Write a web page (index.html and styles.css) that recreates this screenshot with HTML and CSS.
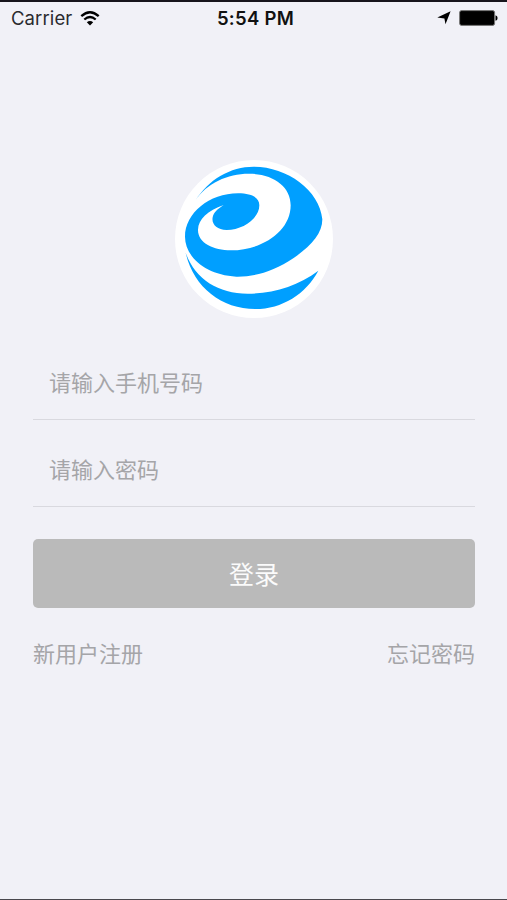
FILE: index.html
```html
<!DOCTYPE html>
<html lang="zh-CN">
<head>
<meta charset="utf-8">
<title>登录</title>
<link rel="stylesheet" href="styles.css">
</head>
<body>
<div class="screen">
  <header class="status">
    <div class="carrier">
      <span class="carrier-name">Carrier</span>
      <svg class="wifi" viewBox="0 0 20 15" width="20" height="15">
        <path d="M1.3 5.2Q10-2.6 18.7 5.2M4.3 8.5Q10 3.6 15.7 8.5" fill="none" stroke="#000" stroke-width="2.3"/>
        <path d="M6.800 11.200Q10 8.600 13.200 11.200L10 14.400Z"/>
      </svg>
    </div>
    <time class="clock">5:54 PM</time>
    <div class="indicators">
      <svg class="location" viewBox="0 0 14 14" width="14" height="14"><path d="M13.600.3L8.500 13.300 7.400 7.400 .3 6.400Z"/></svg>
      <svg class="battery" viewBox="0 0 39 16" width="39" height="16">
        <rect x=".6" y=".6" width="35" height="14.800" rx="2" stroke="#777" stroke-width="1"/>
        <path d="M36.500 5.200Q38.600 5.600 38.600 8T36.500 10.800Z"/>
      </svg>
    </div>
  </header>
  <main class="login">
    <svg class="logo" viewBox="29 30 474 474" width="158" height="158">
      <circle cx="266" cy="267" r="237" fill="#fff"/>
      <g fill="#009fff">
        <path d="M90 152C130 88 195 50 265 50C365 50 463 120 471 208C471 250 438 288 385 324C325 364 268 381 213 380C120 375 59 320 59 260C59 190 132 130 218 130C258 130 282 142 282 166C282 205 233 240 184 240C154 240 138 222 142 202C145 187 157 177 175 165C127 181 99 208 98 239C97 279 144 301 197 301C291 301 376 244 376 166C376 108 322 71 250 71C187 71 124 99 90 152Z"/>
        <path d="M61 308C89 387 158 431 247 431C324 431 398 408 459 362C422 432 350 477 270 477C168 477 84 411 61 308Z"/>
      </g>
    </svg>
    <form class="form">
      <input class="field" type="tel" placeholder="请输入手机号码">
      <input class="field" type="password" placeholder="请输入密码">
      <button class="submit" type="button">登录</button>
    </form>
    <nav class="links">
      <a class="link">新用户注册</a>
      <a class="link">忘记密码</a>
    </nav>
  </main>
</div>
</body>
</html>
```
FILE: styles.css
```css
* { box-sizing: border-box; }
body {
  margin: 0;
  background: #f1f1f7;
  font-family: "Liberation Sans", "Noto Sans CJK SC", sans-serif;
}
.screen {
  height: 900px;
  border-top: 2px solid #17151c;
  border-bottom: 1px solid #49484d;
  overflow: hidden;
}
.status {
  display: grid;
  grid-template-columns: 1fr auto 1fr;
  align-items: center;
  height: 34px;
  padding: 0 9px 2px 11px;
  font-family: Inter, sans-serif;
  color: #111;
}
.carrier { display: flex; align-items: center; gap: 8px; }
.carrier-name { font-size: 18.5px; letter-spacing: 0.1px; color: #2a2a2e; }
.clock { padding-left: 2px; font-size: 18.5px; font-weight: 600; letter-spacing: 0.3px; }
.indicators { display: flex; justify-content: flex-end; align-items: center; gap: 8px; }
.login {
  display: flex;
  flex-direction: column;
  padding: 124px 32px 0 33px;
}
.logo { align-self: center; }
.form { display: flex; flex-direction: column; margin-top: 30px; }
.field {
  height: 72px;
  margin: 0 0 15px;
  padding: 0 16px 5px;
  border: 0;
  border-bottom: 1px solid #d9d9df;
  border-radius: 0;
  outline: 0;
  background: none;
  font: 400 22px "Noto Sans CJK SC", sans-serif;
}
.field::placeholder { color: #a5a5a8; opacity: 1; }
.submit {
  height: 69px;
  margin-top: 17px;
  padding: 0 0 2px;
  border: 0;
  border-radius: 5px;
  background: #bababa;
  color: #fbfbfb;
  font: 400 25px "Noto Sans CJK SC", sans-serif;
}
.links {
  display: flex;
  justify-content: space-between;
  margin-top: 28px;
}
.link { font: 400 22px/32px "Noto Sans CJK SC", sans-serif; color: #a5a5a8; }
```
